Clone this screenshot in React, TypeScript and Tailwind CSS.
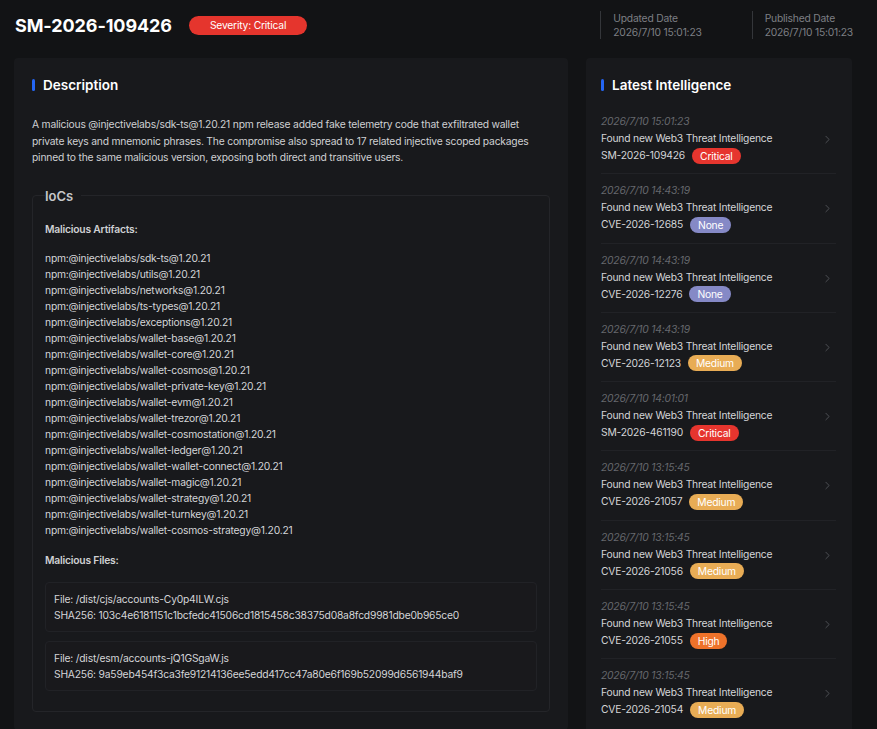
import { ChevronRight } from "lucide-react";

const artifacts = [
  "sdk-ts",
  "utils",
  "networks",
  "ts-types",
  "exceptions",
  "wallet-base",
  "wallet-core",
  "wallet-cosmos",
  "wallet-private-key",
  "wallet-evm",
  "wallet-trezor",
  "wallet-cosmostation",
  "wallet-ledger",
  "wallet-wallet-connect",
  "wallet-magic",
  "wallet-strategy",
  "wallet-turnkey",
  "wallet-cosmos-strategy",
];

const files = [
  {
    path: "/dist/cjs/accounts-Cy0p4ILW.cjs",
    sha: "103c4e6181151c1bcfedc41506cd1815458c38375d08a8fcd9981dbe0b965ce0",
  },
  {
    path: "/dist/esm/accounts-jQ1GSgaW.js",
    sha: "9a59eb454f3ca3fe91214136ee5edd417cc47a80e6f169b52099d6561944baf9",
  },
];

type Severity = "Critical" | "None" | "Medium" | "High";

const sevClass: Record<Severity, string> = {
  Critical: "bg-[#e6352e]",
  None: "bg-[#8589c6]",
  Medium: "bg-[#e8ac55]",
  High: "bg-[#ee722a]",
};

const intel: { date: string; id: string; sev: Severity }[] = [
  { date: "2026/7/10 15:01:23", id: "SM-2026-109426", sev: "Critical" },
  { date: "2026/7/10 14:43:19", id: "CVE-2026-12685", sev: "None" },
  { date: "2026/7/10 14:43:19", id: "CVE-2026-12276", sev: "None" },
  { date: "2026/7/10 14:43:19", id: "CVE-2026-12123", sev: "Medium" },
  { date: "2026/7/10 14:01:01", id: "SM-2026-461190", sev: "Critical" },
  { date: "2026/7/10 13:15:45", id: "CVE-2026-21057", sev: "Medium" },
  { date: "2026/7/10 13:15:45", id: "CVE-2026-21056", sev: "Medium" },
  { date: "2026/7/10 13:15:45", id: "CVE-2026-21055", sev: "High" },
  { date: "2026/7/10 13:15:45", id: "CVE-2026-21054", sev: "Medium" },
];

function SectionTitle({ children }: { children: string }) {
  return (
    <div className="flex h-5 items-center gap-2">
      <span className="h-3 w-[3px] rounded-full bg-[#2466f5]" />
      <h2 className="text-[13.5px] font-semibold leading-5 tracking-normal text-white">
        {children}
      </h2>
    </div>
  );
}

export default function App() {
  return (
    <div className="min-h-screen w-full bg-[#121315] pl-[14px] pr-[25px] font-['Inter','Noto_Sans',sans-serif] text-[10.3px] tracking-[-0.2px]">
      {/* header */}
      <div className="mb-2 flex h-[50px] items-center justify-between">
        <div className="flex items-center gap-[17px] pl-px">
          <h1 className="text-[18px] font-bold tracking-[-0.1px] text-white">
            SM-2026-109426
          </h1>
          <span className="rounded-full bg-[#e5352d] px-[21px] leading-[19px] text-white">
            Severity: Critical
          </span>
        </div>
        <div className="-mr-px flex gap-[50px]">
          {["Updated Date", "Published Date"].map((label) => (
            <div
              key={label}
              className="-mt-px border-l border-[#34363a] pl-3 leading-[14px]"
            >
              <div className="text-[#7d7f84]">{label}</div>
              <div className="text-[#7d7f84]">2026/7/10 15:01:23</div>
            </div>
          ))}
        </div>
      </div>

      <div className="flex items-start gap-[18px]">
        {/* description card */}
        <div className="w-[554px] rounded-sm bg-[#18191c] px-[18px] pb-[18px] pt-[17px]">
          <SectionTitle>Description</SectionTitle>
          <p className="mt-[21px] leading-[16.5px] text-[#cfd0d3]">
            A malicious @injectivelabs/sdk-ts@1.20.21 npm release added fake
            telemetry code that exfiltrated wallet private keys and mnemonic
            phrases. The compromise also spread to 17 related injective scoped
            packages pinned to the same malicious version, exposing both direct
            and transitive users.
          </p>

          <fieldset className="mt-[22px] rounded-sm border border-[#242529] px-3 pb-[20px]">
            <legend className="pr-2 text-[13px] font-semibold leading-4 tracking-normal text-[#c6c7ca]">
              IoCs
            </legend>
            <div className="pt-[17px] font-semibold leading-4 text-[#cfd0d3]">
              Malicious Artifacts:
            </div>
            <ul className="mt-[13px] leading-4 text-[#d4d5d8]">
              {artifacts.map((a) => (
                <li key={a}>npm:@injectivelabs/{a}@1.20.21</li>
              ))}
            </ul>
            <div className="mt-[14px] font-semibold leading-4 text-[#cfd0d3]">
              Malicious Files:
            </div>
            <div className="mt-[14px] flex flex-col gap-[9px]">
              {files.map((f) => (
                <div
                  key={f.path}
                  className="rounded-sm border border-[#212226] bg-[#19191c] px-2 py-[8px] leading-4 text-[#d4d5d8]"
                >
                  <div>File: {f.path}</div>
                  <div>SHA256: {f.sha}</div>
                </div>
              ))}
            </div>
          </fieldset>
        </div>

        {/* latest intelligence */}
        <div className="w-[266px] rounded-sm bg-[#18191c] pb-2 pl-[15px] pr-4 pt-[17px]">
          <SectionTitle>Latest Intelligence</SectionTitle>
          <div className="mt-[10px]">
            {intel.map((item, i) => (
              <div
                key={i}
                className="flex items-start border-b border-[#212226] pb-[9.3px] pt-2 last:border-b-0"
              >
                <div className="min-w-0 flex-1 leading-[17px]">
                  <div className="italic text-[#66686d]">{item.date}</div>
                  <div className="text-[#d4d5d8]">
                    Found new Web3 Threat Intelligence
                  </div>
                  <div className="flex h-[17px] items-center gap-[7px] text-[#d4d5d8]">
                    <span>{item.id}</span>
                    <span
                      className={`${sevClass[item.sev]} rounded-full px-[8px] leading-[16px] text-white`}
                    >
                      {item.sev}
                    </span>
                  </div>
                </div>
                <ChevronRight
                  size={13}
                  strokeWidth={1.4}
                  className="mr-[2px] mt-[20px] text-[#5d5f64]"
                />
              </div>
            ))}
          </div>
        </div>
      </div>
    </div>
  );
}
